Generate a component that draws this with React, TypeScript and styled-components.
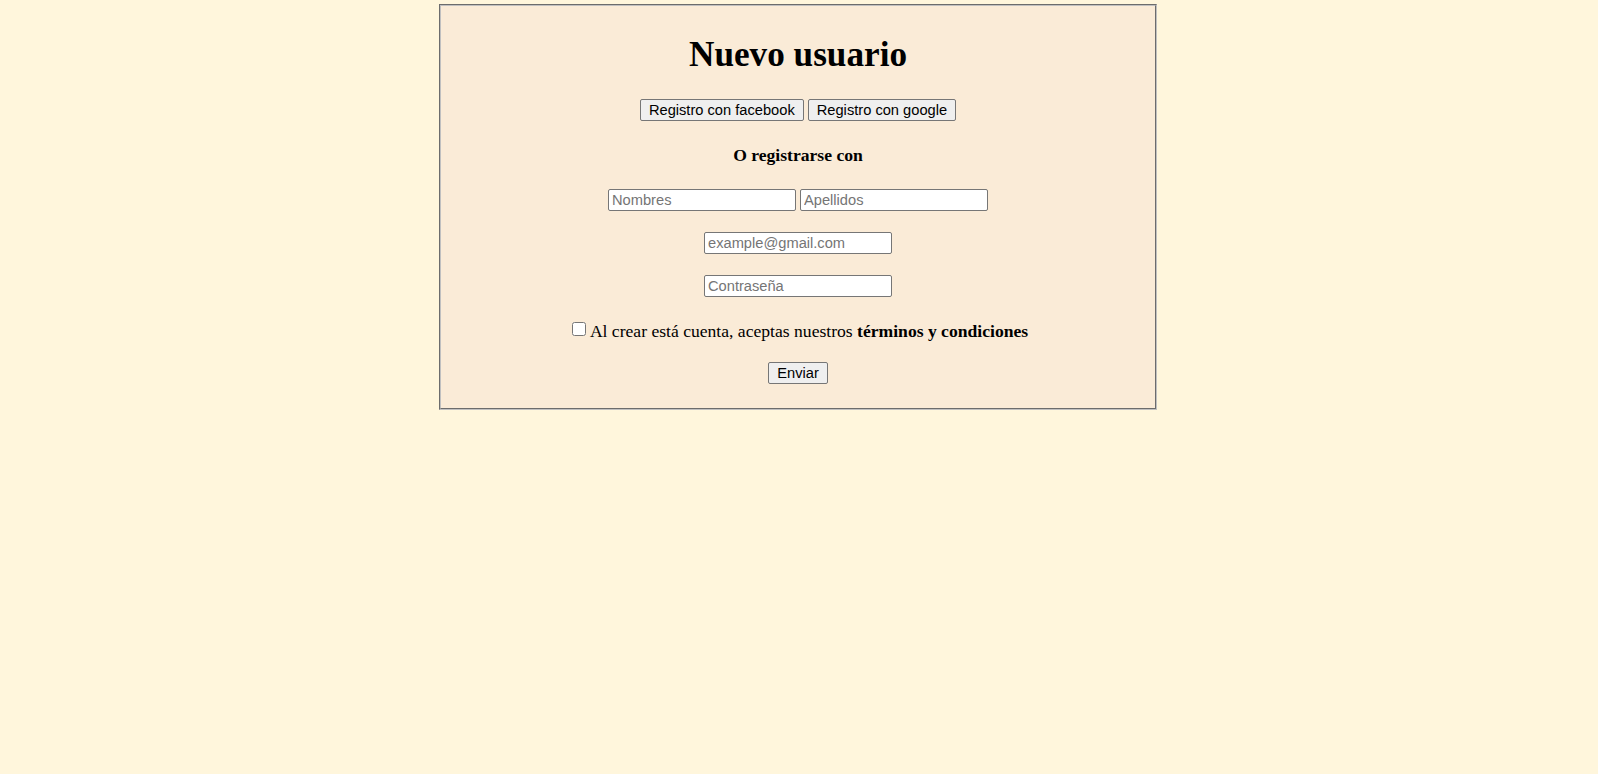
import React from 'react';
import styled, { createGlobalStyle } from 'styled-components';

const GlobalStyle = createGlobalStyle`
  html, body {
    margin: 0;
    background-color: #fff6dc;
  }
  body {
    min-height: 774px;
    font-family: 'Liberation Serif', 'Times New Roman', serif;
  }
`;

export default function App() {
  return (
    <>
      <GlobalStyle />
      <Card>
        <Title>Nuevo usuario</Title>
        <SocialRow>
          <Button type="button">Registro con facebook</Button>
          <Button type="button">Registro con google</Button>
        </SocialRow>
        <Subtitle>O registrarse con</Subtitle>
        <FieldRow $top={24}>
          <TextInput type="text" placeholder="Nombres" />
          <TextInput type="text" placeholder="Apellidos" />
        </FieldRow>
        <FieldRow $top={21}>
          <TextInput type="email" placeholder="example@gmail.com" />
        </FieldRow>
        <FieldRow $top={21}>
          <TextInput type="password" placeholder="Contraseña" />
        </FieldRow>
        <Terms>
          <Checkbox type="checkbox" />
          Al crear está cuenta, aceptas nuestros <b>términos y condiciones</b>
        </Terms>
        <FieldRow $top={21}>
          <Button type="submit">Enviar</Button>
        </FieldRow>
      </Card>
    </>
  );
}

const Card = styled.form`
  box-sizing: border-box;
  width: 718px;
  margin: 4px 0 0 calc(50% - 360px);
  padding: 29px 0 24px;
  border: 2px groove #c0c0c0;
  background-color: #faebd7;
  text-align: center;
  color: #000;
`;

const Title = styled.h1`
  margin: 0;
  font-size: 35.2px;
  line-height: 40px;
  font-weight: bold;
`;

const SocialRow = styled.div`
  display: flex;
  justify-content: center;
  gap: 4px;
  margin-top: 24px;
`;

const Button = styled.button`
  box-sizing: border-box;
  height: 22px;
  padding: 0 8px;
  border: 1px solid #767676;
  border-radius: 2px;
  background-color: #efefef;
  font-family: 'Liberation Sans', Arial, sans-serif;
  font-size: 14.67px;
  color: #000;
`;

const Subtitle = styled.h4`
  margin: 24px 0 0;
  font-size: 17.6px;
  line-height: 20px;
  font-weight: bold;
`;

const FieldRow = styled.div<{ $top: number }>`
  display: flex;
  justify-content: center;
  gap: 4px;
  margin-top: ${(p) => p.$top}px;
`;

const TextInput = styled.input`
  box-sizing: border-box;
  width: 188px;
  height: 22px;
  padding: 1px 3px;
  border: 1px solid #767676;
  border-radius: 2px;
  background-color: #fff;
  font-family: 'Liberation Sans', Arial, sans-serif;
  font-size: 14.67px;

  &::placeholder {
    color: #757575;
  }
`;

const Terms = styled.p`
  margin: 24px 0 0;
  font-size: 17.6px;
  line-height: 20px;
`;

const Checkbox = styled.input`
  width: 14px;
  height: 14px;
  margin: 0 4px 0 4px;
  vertical-align: 1px;
`;
